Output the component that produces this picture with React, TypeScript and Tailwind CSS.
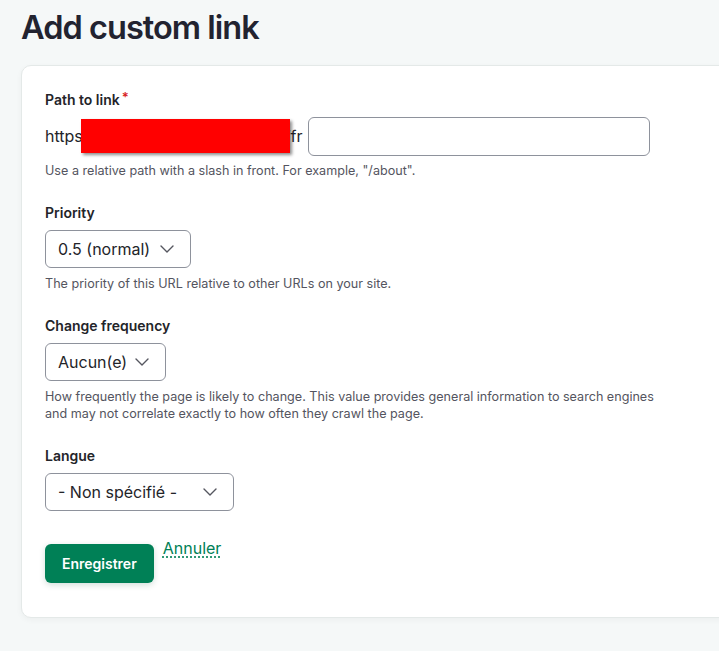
function Chevron() {
  return (
    <svg width="14" height="8" viewBox="0 0 14 8" fill="none">
      <path d="M1 1l6 6 6-6" stroke="#55565f" strokeWidth="1.4" strokeLinecap="round" strokeLinejoin="round" />
    </svg>
  );
}

function Select({ value, width }: { value: string; width: string }) {
  return (
    <div
      className={`${width} h-[38px] flex items-center justify-between pl-[12px] pr-[16px] border border-[#8e929c] rounded-[6px] bg-white text-[16px] text-[#232429]`}
    >
      <span>{value}</span>
      <Chevron />
    </div>
  );
}

function Label({ children, required }: { children: string; required?: boolean }) {
  return (
    <div className="text-[14px] leading-[18px] font-semibold text-[#232429] mb-[8px]">
      {children}
      {required && <span className="text-[#d72222] ml-[2px] align-top text-[13px] leading-[12px]">*</span>}
    </div>
  );
}

function Help({ children }: { children: React.ReactNode }) {
  return <div className="mt-[7px] text-[12.6px] leading-[17px] text-[#545560]">{children}</div>;
}

export default function App() {
  return (
    <div className="min-h-[651px] w-[719px] overflow-hidden bg-[#f5f8f8] font-['Inter',sans-serif]">
      <h1 className="pl-[21px] pt-[6px] text-[32.5px] leading-[44px] font-semibold tracking-[-0.03em] text-[#222330]">
        Add custom link
      </h1>
      <div className="ml-[21px] mt-[15px] w-[720px] bg-white border border-[#e4e9e8] rounded-[10px] shadow-[0_2px_6px_rgba(0,0,0,0.04)] pl-[23px] pt-[25px] pb-[34px]">
        <Label required>Path to link</Label>
        <div className="flex items-center h-[38px] text-[16px] text-[#232429]">
          <span>https</span>
          <div className="relative z-10 -ml-[2px] w-[209px] h-[34px] bg-[#ff0000] shadow-[2px_2px_3px_rgba(0,0,0,0.45)]" />
          <span className="-ml-[5px]">/fr</span>
          <div className="ml-[5px] w-[342px] h-[39px] border border-[#8e929c] rounded-[6px] bg-white" />
        </div>
        <Help>Use a relative path with a slash in front. For example, "/about".</Help>

        <div className="mt-[25px]">
          <Label>Priority</Label>
          <Select value="0.5 (normal)" width="w-[146px]" />
          <Help>The priority of this URL relative to other URLs on your site.</Help>
        </div>

        <div className="mt-[25px]">
          <Label>Change frequency</Label>
          <Select value="Aucun(e)" width="w-[121px]" />
          <Help>
            How frequently the page is likely to change. This value provides general information to search engines
            <br />
            and may not correlate exactly to how often they crawl the page.
          </Help>
        </div>

        <div className="mt-[25px]">
          <Label>Langue</Label>
          <Select value="- Non spécifié -" width="w-[189px]" />
        </div>

        <div className="mt-[33px] flex items-start gap-[9px]">
          <button className="h-[39px] px-[17px] rounded-[6px] bg-[#008056] text-white text-[14px] font-semibold shadow-[0_2px_6px_rgba(0,80,50,0.18)]">
            Enregistrer
          </button>
          <a className="-mt-[6px] text-[16px] leading-[20px] text-[#008056] underline decoration-dotted decoration-[#008056] underline-offset-[3px]">
            Annuler
          </a>
        </div>
      </div>
    </div>
  );
}
